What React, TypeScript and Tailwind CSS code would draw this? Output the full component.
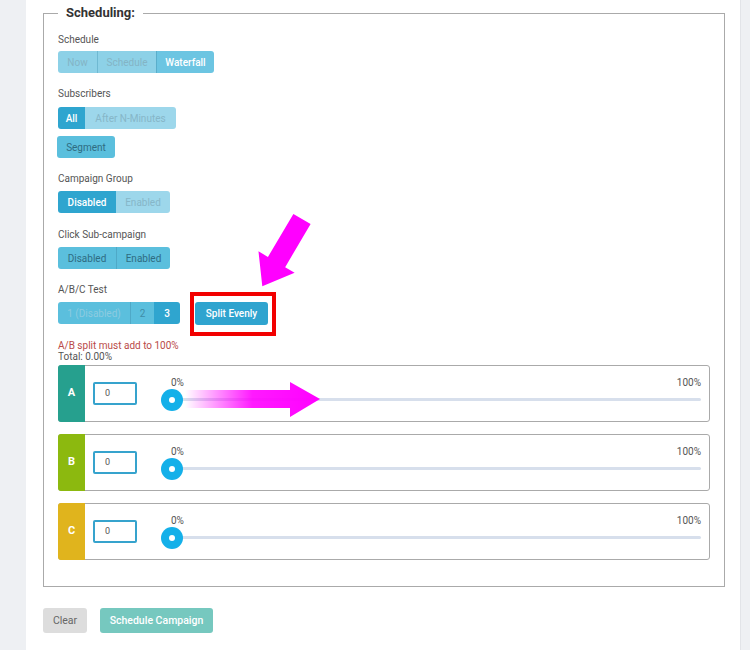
import React from 'react'

const light = 'bg-[#9dd7eb] text-[#86b6c8]'
const mid = 'bg-[#5bbfdd] text-[#2f6c82]'
const dark = 'bg-[#2fa5cf] text-white font-medium'

function Label({ children }: { children: React.ReactNode }) {
  return <div className="text-[10px] leading-[14px] text-[#555]">{children}</div>
}

const rows = [
  { key: 'A', color: 'bg-[#26a08e]' },
  { key: 'B', color: 'bg-[#8cb90f]' },
  { key: 'C', color: 'bg-[#e0b41d]' },
]

function SplitRow({ letter, color }: { letter: string; color: string }) {
  return (
    <div className="flex h-[57px] rounded-[3px] border border-[#aaa]">
      <div className={`w-[27px] -my-px -ml-px flex items-center justify-center rounded-l-[3px] text-[11px] font-bold text-white ${color}`}>
        {letter}
      </div>
      <div className="flex items-center pl-[8px]">
        <div className="flex h-[23px] w-[44px] items-center rounded-[2px] border-2 border-[#36a3cd] pl-[10px] text-[9px] text-[#555]">
          0
        </div>
      </div>
      <div className="ml-[24px] mr-[8px] flex-1 pt-[11px]">
        <div className="flex justify-between pl-[10px] text-[10px] leading-[12px] text-[#555]">
          <span>0%</span>
          <span>100%</span>
        </div>
        <div className="relative mt-[9px] ml-[11px] h-[3px] rounded-full bg-[#d7dfec]">
          <div className="absolute left-[-11px] top-[-9.5px] flex h-[22px] w-[22px] items-center justify-center rounded-full bg-[#14b0e9]">
            <div className="h-[6px] w-[6px] rounded-full bg-white" />
          </div>
        </div>
      </div>
    </div>
  )
}

export default function App() {
  return (
    <div className="relative flex h-[650px] w-[750px] bg-[#eef0f3]" style={{ fontFamily: 'Roboto, "Liberation Sans", sans-serif' }}>
      <div className="ml-[26px] w-[715px] border-r border-[#e2e4e8] bg-white pl-[17px]">
        <fieldset className="mt-[4px] w-[682px] border border-[#aaa] px-[14px] pb-[26px]">
          <legend className="px-[8px] text-[13px] font-bold leading-[18px] text-[#333]">Scheduling:</legend>

          <div className="mt-[11px]">
            <Label>Schedule</Label>
            <div className="mt-[4px] flex">
              <div className="flex h-[22px] w-[39px] items-center justify-center rounded-l-[3px] bg-[#8dd1e7] text-[10px] text-[#84b4c5]">Now</div>
              <div className="flex h-[22px] w-[59px] items-center justify-center border-l border-[#6fb9d2] bg-[#8dd1e7] text-[10px] text-[#84b4c5]">Schedule</div>
              <div className="flex h-[22px] w-[58px] items-center justify-center rounded-r-[3px] border-l border-[#5aaecb] bg-[#6cc5e2] text-[10px] font-medium text-white">Waterfall</div>
            </div>
          </div>

          <div className="mt-[14px]">
            <Label>Subscribers</Label>
            <div className="mt-[6px] flex">
              <div className={`flex h-[22px] w-[27px] items-center justify-center rounded-l-[3px] text-[10px] ${dark}`}>All</div>
              <div className={`flex h-[22px] w-[91px] items-center justify-center rounded-r-[3px] text-[10px] ${light}`}>After N-Minutes</div>
            </div>
            <div className={`mt-[7px] -ml-px flex h-[22px] w-[58px] items-center justify-center rounded-[3px] text-[10px] ${mid}`}>Segment</div>
          </div>

          <div className="mt-[14px]">
            <Label>Campaign Group</Label>
            <div className="mt-[5px] flex">
              <div className={`flex h-[22px] w-[58px] items-center justify-center rounded-l-[3px] text-[10px] ${dark}`}>Disabled</div>
              <div className={`flex h-[22px] w-[54px] items-center justify-center rounded-r-[3px] text-[10px] ${light}`}>Enabled</div>
            </div>
          </div>

          <div className="mt-[15px]">
            <Label>Click Sub-campaign</Label>
            <div className="mt-[5px] flex">
              <div className={`flex h-[22px] w-[58px] items-center justify-center rounded-l-[3px] text-[10px] ${mid}`}>Disabled</div>
              <div className={`flex h-[22px] w-[54px] items-center justify-center rounded-r-[3px] border-l border-[#4fa9c7] text-[10px] ${mid}`}>Enabled</div>
            </div>
          </div>

          <div className="mt-[14px]">
            <Label>A/B/C Test</Label>
            <div className="mt-[5px] flex items-start">
              <div className="flex h-[22px] w-[72px] items-center justify-center rounded-l-[3px] bg-[#5bbfdd] text-[10px] text-[#8ccbe0]">1 (Disabled)</div>
              <div className="flex h-[22px] w-[24px] items-center justify-center border-l border-[#4fa9c7] bg-[#5bbfdd] text-[10px] text-[#3f8ea8]">2</div>
              <div className={`flex h-[22px] w-[26px] items-center justify-center rounded-r-[3px] text-[10px] ${dark}`}>3</div>
              <div className="relative ml-[15px]">
                <div className="flex h-[23px] w-[73px] items-center justify-center rounded-[3px] bg-[#2fa4cf] text-[10px] font-medium text-white">Split Evenly</div>
                <div className="absolute left-[-5px] top-[-10px] h-[44px] w-[86px] border-4 border-[#f20000]" />
              </div>
            </div>
          </div>

          <div className="mt-[15px] text-[10px] leading-[11px] text-[#b94a48]">A/B split must add to 100%</div>
          <div className="text-[10px] leading-[11px] text-[#555]">Total: 0.00%</div>

          <div className="mt-[3px] flex flex-col gap-[12px]">
            {rows.map((r) => (
              <SplitRow key={r.key} letter={r.key} color={r.color} />
            ))}
          </div>
        </fieldset>

        <div className="mt-[21px] flex gap-[13px]">
          <div className="flex h-[25px] w-[44px] items-center justify-center rounded-[3px] bg-[#dddddd] text-[10.5px] text-[#666]">Clear</div>
          <div className="flex h-[25px] w-[113px] items-center justify-center rounded-[3px] bg-[#76c8bf] text-[10.5px] font-medium text-white">Schedule Campaign</div>
        </div>
      </div>

      <svg className="pointer-events-none absolute left-0 top-0" width="750" height="650">
        <defs>
          <linearGradient id="fade" x1="185" y1="0" x2="320" y2="0" gradientUnits="userSpaceOnUse">
            <stop offset="0" stopColor="#ff00ff" stopOpacity="0" />
            <stop offset="0.5" stopColor="#ff00ff" stopOpacity="0.9" />
            <stop offset="1" stopColor="#ff00ff" />
          </linearGradient>
        </defs>
        <polygon
          points="0,-10 50,-10 50,-21 78,0 50,21 50,10 0,10"
          fill="#ff00ff"
          transform="translate(302,219) rotate(120.6)"
        />
        <polygon points="185,390 290,390 290,382 320,399 290,417 290,408 185,408" fill="url(#fade)" />
      </svg>
    </div>
  )
}
